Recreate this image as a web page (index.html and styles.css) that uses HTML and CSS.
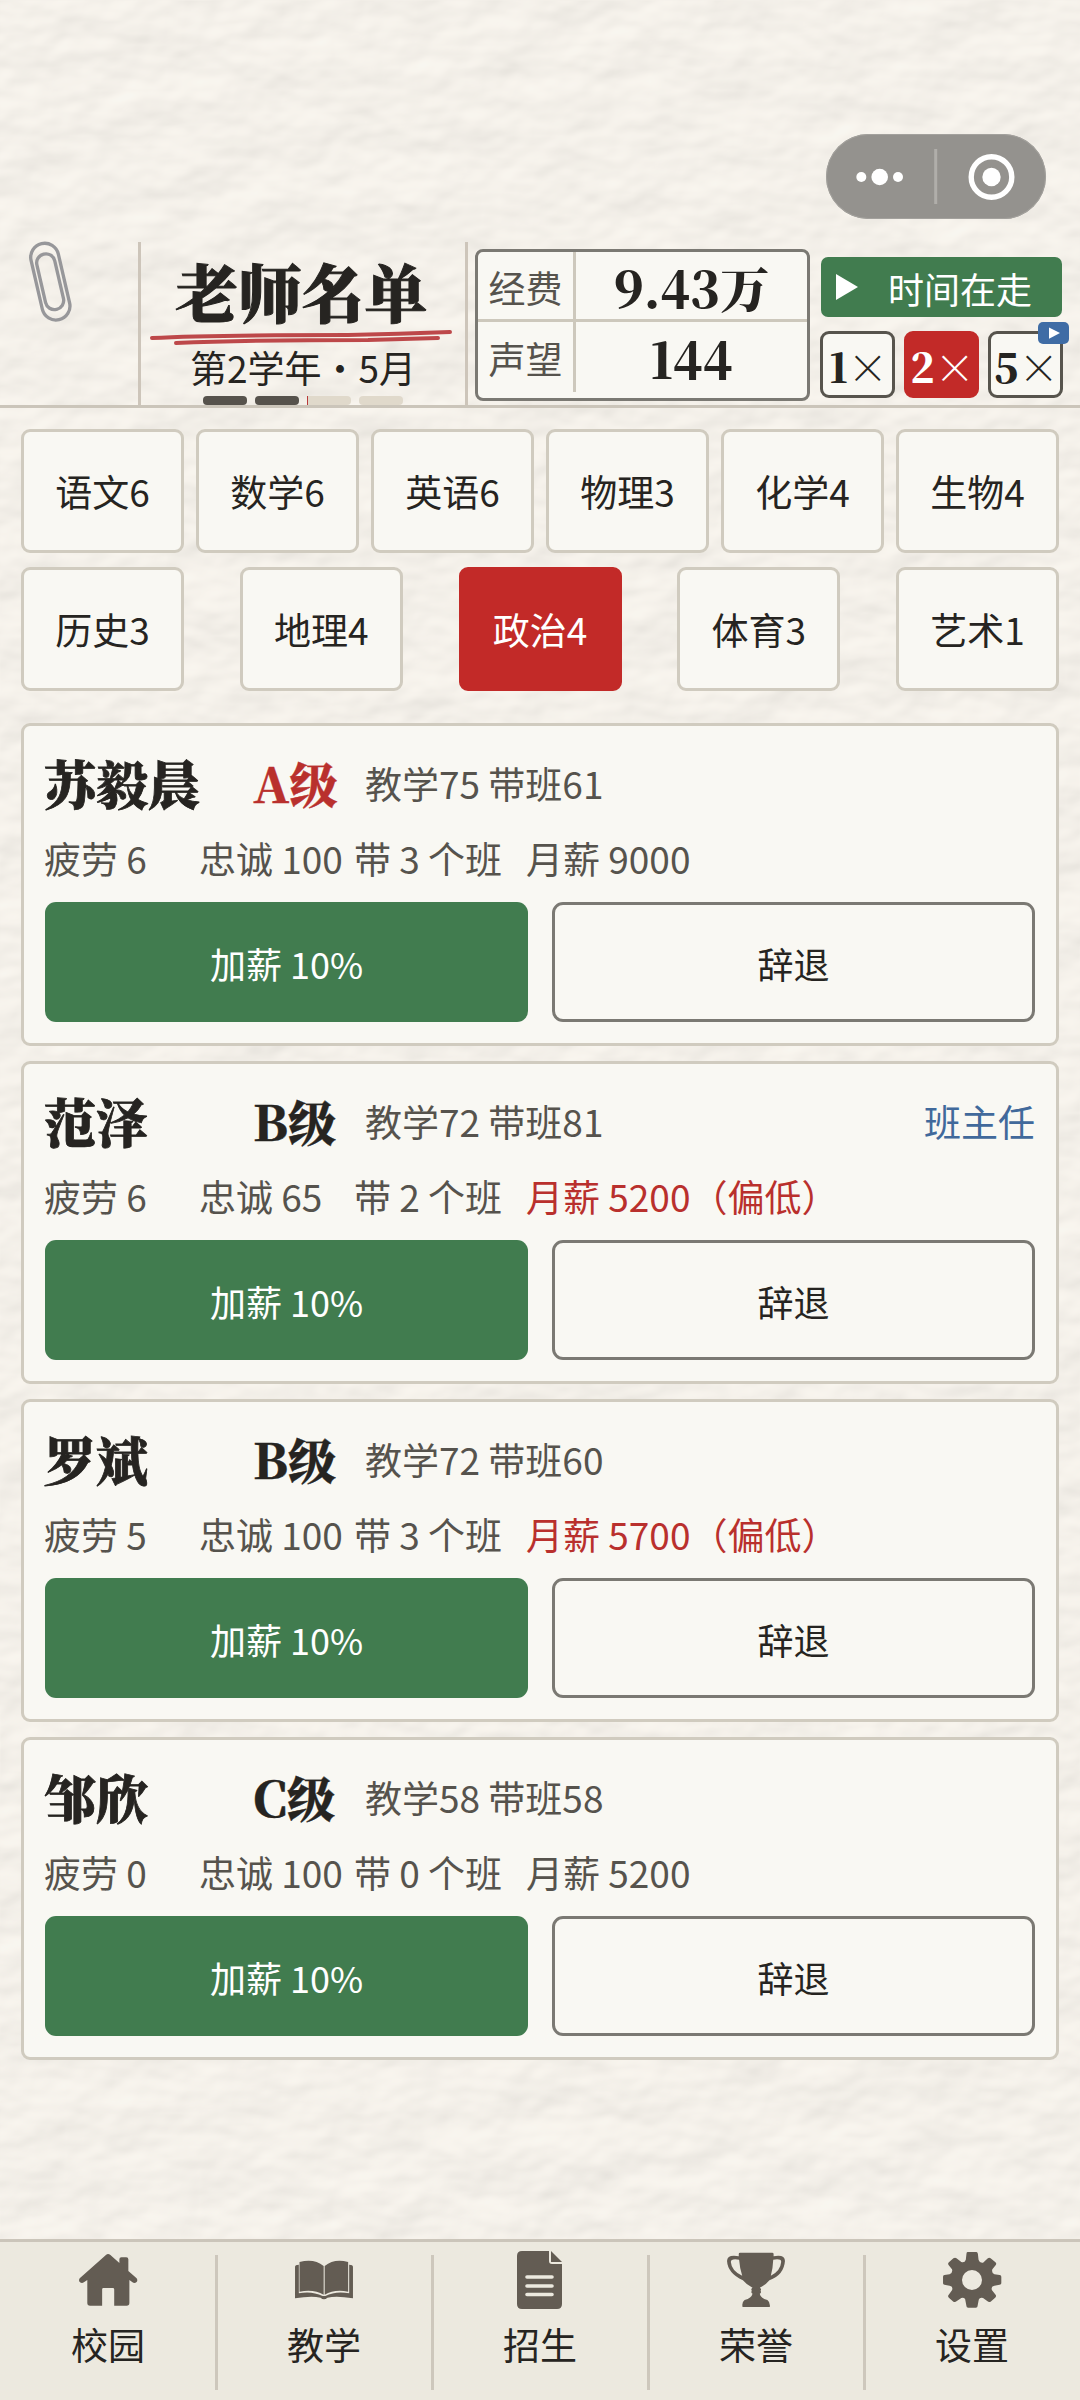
FILE: index.html
```html
<!DOCTYPE html>
<html lang="zh-CN">
<head>
<meta charset="utf-8">
<title>老师名单</title>
<link rel="stylesheet" href="styles.css">
</head>
<body>
<svg class="paper" width="1080" height="2400" aria-hidden="true">
  <filter id="grain" x="0" y="0" width="100%" height="100%" color-interpolation-filters="sRGB">
    <feTurbulence type="fractalNoise" baseFrequency="0.015 0.022" numOctaves="3" seed="8"/>
    <feDiffuseLighting surfaceScale="3" diffuseConstant="1.1" lighting-color="#f5f0ea">
      <feDistantLight azimuth="245" elevation="64"/>
    </feDiffuseLighting>
  </filter>
  <rect width="1080" height="2400" filter="url(#grain)" opacity="0.36"/>
</svg>
<div class="app">
  <div class="statusbar">
    <div class="capsule">
      <svg width="220" height="85" viewBox="0 0 220 85">
        <g fill="#fff"><circle cx="35.3" cy="43" r="5"/><circle cx="53.7" cy="43" r="8.3"/><circle cx="72" cy="43" r="5"/><circle cx="165.5" cy="43" r="9.2"/></g>
        <circle cx="165.5" cy="43" r="20.3" fill="none" stroke="#fff" stroke-width="5.4"/>
        <path d="M109.700 15V70" stroke="#b0aeaa" stroke-width="3"/>
      </svg>
    </div>
  </div>

  <header class="header">
    <div class="clip">
      <svg width="46" height="84" viewBox="80 60 138 252" fill="none" stroke="#97979a" stroke-width="10">
        <g transform="rotate(-13 150 185)">
          <rect x="108" y="68" width="84" height="234" rx="42"/>
          <rect x="122" y="100" width="55" height="170" rx="27"/>
        </g>
      </svg>
    </div>
    <div class="heading">
      <h1>老师名单</h1>
      <svg class="underline" width="306" height="16" viewBox="0 0 306 16" fill="none" stroke="#bd484a" stroke-width="4" stroke-linecap="round">
        <path d="M2 9Q58 6 198 6Q248 5 300 3"/><path d="M26 14Q98 11 218 11L288 9"/>
      </svg>
      <p class="date">第2学年・5月</p>
      <div class="progress"><i class="done"></i><i class="done"></i><i class="current"></i><i></i></div>
    </div>
    <div class="status">
      <div class="stats">
        <span class="stat-name">经费</span><b class="num">9.43万</b>
        <span class="stat-name">声望</span><b class="num">144</b>
      </div>
      <div class="clock">
        <div class="running">
          <svg width="22" height="26" viewBox="0 0 22 26"><path d="M0 0L22 13L0 26Z" fill="#fff"/></svg>
          <span>时间在走</span>
        </div>
        <div class="speeds">
          <div class="speed"><b>1</b><span>×</span></div>
          <div class="speed on"><b>2</b><span>×</span></div>
          <div class="speed"><b>5</b><span>×</span>
            <svg class="ad" width="31" height="22" viewBox="0 0 31 22"><rect width="31" height="22" rx="5" fill="#3f6ca5"/><path d="M11 5.500L22 11L11 16.700Z" fill="#fff"/></svg>
          </div>
        </div>
      </div>
    </div>
  </header>

  <nav class="subjects">
    <div class="row"><a>语文6</a><a>数学6</a><a>英语6</a><a>物理3</a><a>化学4</a><a>生物4</a></div>
    <div class="row"><a>历史3</a><a>地理4</a><a class="on">政治4</a><a>体育3</a><a>艺术1</a></div>
  </nav>

  <main class="list">
    <section class="card">
      <div class="top"><b class="name">苏毅晨</b><b class="grade red">A级</b><span>教学75 带班61</span></div>
      <div class="info"><span>疲劳 6</span><span>忠诚 100</span><span>带 3 个班</span><span>月薪 9000</span></div>
      <div class="actions"><button class="raise">加薪 10%</button><button class="fire">辞退</button></div>
    </section>
    <section class="card">
      <div class="top"><b class="name">范泽</b><b class="grade">B级</b><span>教学72 带班81</span><span class="head">班主任</span></div>
      <div class="info"><span>疲劳 6</span><span>忠诚 65</span><span>带 2 个班</span><span class="low">月薪 5200（偏低）</span></div>
      <div class="actions"><button class="raise">加薪 10%</button><button class="fire">辞退</button></div>
    </section>
    <section class="card">
      <div class="top"><b class="name">罗斌</b><b class="grade">B级</b><span>教学72 带班60</span></div>
      <div class="info"><span>疲劳 5</span><span>忠诚 100</span><span>带 3 个班</span><span class="low">月薪 5700（偏低）</span></div>
      <div class="actions"><button class="raise">加薪 10%</button><button class="fire">辞退</button></div>
    </section>
    <section class="card">
      <div class="top"><b class="name">邹欣</b><b class="grade">C级</b><span>教学58 带班58</span></div>
      <div class="info"><span>疲劳 0</span><span>忠诚 100</span><span>带 0 个班</span><span>月薪 5200</span></div>
      <div class="actions"><button class="raise">加薪 10%</button><button class="fire">辞退</button></div>
    </section>
  </main>

  <footer class="tabbar">
    <a><svg width="60" height="60" viewBox="226 90 174 180" preserveAspectRatio="none"><path d="M307 105Q313 99 320 105L346 129V118Q346 112 352 112H366Q372 112 372 118V153L396 175Q400 181 396 186Q390 191 384 187L375 180V249Q375 257 367 257H331V208Q331 204 327 204H300Q296 204 296 208V257H261Q253 257 253 249V180L243 187Q237 191 231 186Q227 181 231 175Z"/></svg>校园</a>
    <a><svg width="60" height="60" viewBox="854 90 174 180" preserveAspectRatio="none"><path d="M870 126Q912 114 940 138V224Q912 207 870 215Z"/><path d="M943 138Q971 114 1011 126V215Q971 207 943 224Z"/><path d="M868 134Q857 134 857 140V235Q905 226 931 233Q941 242 951 233Q977 226 1025 235V140Q1025 134 1014 134V220Q975 212 945 228H937Q905 212 868 220Z"/></svg>教学</a>
    <a><svg width="48" height="60" viewBox="0 0 48 60"><path d="M6 1H33V11Q33 14 36 14H46V54Q46 59 41 59H6Q1 59 1 54V6Q1 1 6 1Z"/><path d="M35 1L46 12H35Z"/><path d="M11 27H36M11 36H36M11 44.500H36" stroke="#ece9df" stroke-width="3.600" stroke-linecap="round"/></svg>招生</a>
    <a><svg width="60" height="60" viewBox="540 90 174 180" preserveAspectRatio="none"><path fill-rule="evenodd" d="M581 98H674Q678 98 678 102V109Q711 103 711 123Q708 165 666 181Q655 195 638 203Q644 207 640 212Q644 217 638 221Q640 234 660 240Q669 247 667 261H588Q585 247 594 240Q614 234 617 221Q611 217 615 212Q611 207 617 203Q600 195 589 181Q545 160 543 123Q543 103 577 109V102Q577 98 581 98ZM578 119Q554 115 554 126Q556 153 587 167Q580 145 578 119ZM677 119Q701 115 700 126Q698 153 670 167Q676 145 677 119Z"/></svg>荣誉</a>
    <a><svg width="60" height="60" viewBox="1167 90 174 180" preserveAspectRatio="none"><path fill-rule="evenodd" d="M1241 96H1267Q1270 96 1271 101L1273 119Q1276 129 1286 128L1300 115Q1304 112 1308 115L1322 127Q1326 131 1323 135L1313 148Q1310 158 1319 163L1334 165Q1339 166 1339 170V190Q1339 194 1334 194L1319 197Q1308 199 1312 211L1323 225Q1325 229 1321 233L1308 245Q1303 248 1299 244L1286 234Q1275 231 1273 242L1270 259Q1270 263 1265 263H1243Q1238 263 1238 259L1235 242Q1234 231 1223 234L1209 244Q1205 248 1200 245L1187 233Q1183 229 1186 225L1196 211Q1200 199 1189 197L1174 194Q1170 194 1170 190V170Q1170 166 1174 165L1189 163Q1199 158 1196 148L1186 135Q1183 131 1187 127L1200 115Q1205 112 1209 115L1223 126Q1233 129 1236 119L1238 101Q1238 96 1241 96ZM1225 180A29 30 0 1 0 1283 180A29 30 0 1 0 1225 180Z"/></svg>设置</a>
  </footer>
</div>
</body>
</html>
```
FILE: styles.css
```css
* { box-sizing: border-box; }
body {
  margin: 0;
  background: #f5f2eb;
  color: #262421;
  font-family: "Noto Sans CJK SC", sans-serif;
  font-size: 37px;
  font-weight: 400;
  line-height: 54px;
}
.paper { position: absolute; top: 0; left: 0; z-index: -1; }
.app { width: 1080px; height: 2400px; display: flex; flex-direction: column; }
b, h1 { font-family: "Noto Serif CJK SC", "Source Han Serif SC", "Liberation Serif", "Noto Sans CJK SC", serif; font-weight: 900; }

.statusbar { height: 242px; padding: 134px 34px 0 0; display: flex; justify-content: flex-end; align-items: flex-start; }
.capsule { width: 220px; height: 85px; border-radius: 43px; background: #94928e; box-shadow: inset 0 0 0 1px #a3a19d; }
.capsule svg { display: block; }

.header { height: 166px; display: grid; grid-template-columns: 138px 330px 612px; border-bottom: 3px solid #cbc5ba; }
.clip { padding: 0 0 0 27px; }
.clip svg { display: block; margin-top: -2px; }
.heading { border: solid #cdc5ba; border-width: 0 3px; display: flex; flex-direction: column; align-items: center; overflow: hidden; }
h1 { margin: 12px 3px 3px 0; font-size: 63px; line-height: 72px; height: 72px; white-space: nowrap; -webkit-text-stroke: 1px currentColor; }
.underline { display: block; }
.date { margin: -5px 0 0; height: 54px; white-space: nowrap; }
.progress { display: flex; gap: 8px; margin: 2px 1px 0 0; }
.progress i { width: 44px; height: 9px; border-radius: 4px; background: #e0d9cb; }
.progress .done { background: #56524c; }
.progress .current { border-left: 1px solid #b8393a; border-radius: 0 4px 4px 0; }

.status { display: flex; gap: 10px; padding: 7px 0 0 7px; }
.stats {
  width: 335px; height: 152px; border: 3px solid #7b7973; border-radius: 8px; background: #f9f8f3;
  display: grid; grid-template-columns: 98px 1fr; grid-template-rows: 70px 70px;
}
.stats > * { display: flex; align-items: center; justify-content: center; padding-top: 2px; }
.stat-name { color: #56534d; border-right: 3px solid #cdc8bc; }
.stats > :nth-child(-n+2) { border-bottom: 3px solid #cdc8bc; }
.stats .num { font-size: 49px; }
.clock { width: 243px; padding-top: 8px; }
.running {
  margin-left: 1px; height: 60px; width: 241px; border-radius: 7px; background: #417c4f; color: #fff;
  display: flex; align-items: center; padding-left: 15px; gap: 30px; font-size: 36px;
}
.running span { padding-top: 2px; }
.speeds { display: flex; gap: 9px; margin-top: 14px; }
.speed {
  position: relative; width: 75px; height: 67px; border: 3px solid #57544d; border-radius: 9px; background: #f9f8f3;
  display: flex; align-items: center; justify-content: center; font-size: 40px; padding-top: 2px;
}
.speed span { width: 38px; text-align: center; font-family: "Noto Sans CJK SC", sans-serif; font-weight: 300; }
.speed.on { background: #c22a28; border-color: #c22a28; color: #fff; }
.ad { position: absolute; right: -9px; top: -12px; }

.subjects { padding: 21px 21px 0; display: flex; flex-direction: column; gap: 14px; }
.row { display: flex; justify-content: space-between; }
.row a {
  width: 163px; height: 124px; border: 3px solid #d0cbbf; border-radius: 9px; background: #f9f8f3;
  display: flex; align-items: center; justify-content: center;
}
.row .on { background: #c22a28; border-color: #c22a28; color: #fff; }

.list { flex: 1; padding: 32px 21px 0; display: flex; flex-direction: column; gap: 15px; }
.card { height: 323px; border: 3px solid #d0cbbf; border-radius: 9px; background: #f9f8f3; padding: 19px 21px 0; color: #56534d; }
.top { display: flex; align-items: center; height: 76px; white-space: nowrap; }
.name { margin-left: -1px; width: 209px; font-size: 52px; color: #262421; -webkit-text-stroke: 0.8px currentColor; }
.grade { width: 112px; font-size: 48px; color: #262421; -webkit-text-stroke: 0.4px currentColor; }
.grade.red, .low { color: #b9302d; }
.head { margin-left: auto; color: #41699b; }
.info { margin-left: -1px; display: grid; grid-template-columns: 155px 155px 172px 1fr; height: 73px; align-items: center; white-space: nowrap; }
.actions { display: grid; grid-template-columns: 1fr 1fr; gap: 24px; margin-top: 8px; }
button { height: 120px; padding: 2px 0 0; border-radius: 11px; font: inherit; font-size: 36px; }
.raise { border: 0; background: #417c4f; color: #fff; }
.fire { border: 3px solid #7b7973; background: #f9f8f3; color: #262421; }

.tabbar { height: 161px; border-top: 3px solid #cbc5ba; background: #ece9df; display: grid; grid-template-columns: repeat(5, 1fr); padding-top: 13px; }
.tabbar a { position: relative; height: 135px; display: flex; flex-direction: column; align-items: center; }
.tabbar a:not(:last-child)::after { content: ""; position: absolute; right: -2px; top: 0; width: 3px; height: 135px; background: #cdc7bc; }
.tabbar svg { display: block; margin: -5px 0 7px; fill: #635c53; }
```
